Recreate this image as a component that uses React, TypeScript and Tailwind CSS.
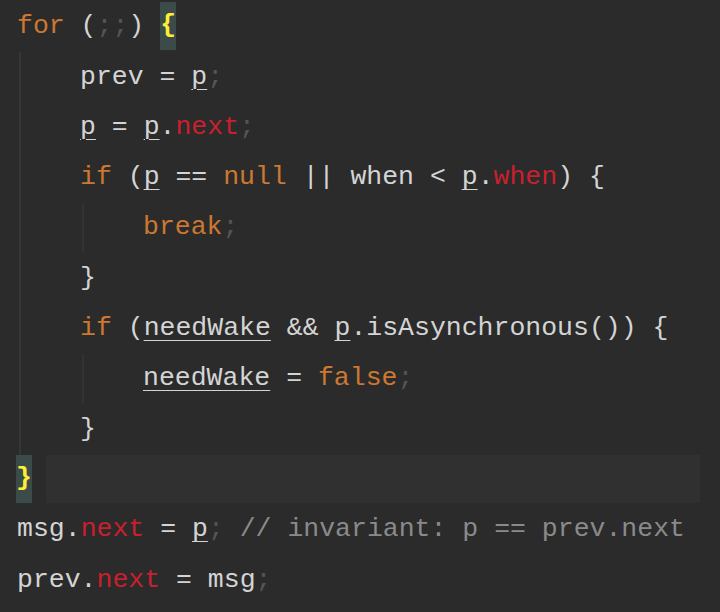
const TXT = "text-[#d4d4d4]";

function Kw({ children }: { children: string }) {
  return <span className="text-[#cc7832]">{children}</span>;
}

function Fld({ children }: { children: string }) {
  return <span className="text-[#c8202e]">{children}</span>;
}

function Semi() {
  return <span className="text-[#555555]">;</span>;
}

function Var({ children }: { children: string }) {
  return (
    <span className="underline decoration-1 underline-offset-[5px]">{children}</span>
  );
}

function Brace({ children }: { children: string }) {
  return (
    <span className="flex h-[48px] w-[16px] items-center justify-center self-start bg-[#3a4b4a] font-bold text-[#ffee33]">
      {children}
    </span>
  );
}

function Line({ children, className = "" }: { children: React.ReactNode; className?: string }) {
  return <div className={`flex h-[50.3px] items-center whitespace-pre ${className}`}>{children}</div>;
}

export default function App() {
  return (
    <div
      className={`h-[612px] w-[720px] overflow-hidden bg-[#2b2b2b] pt-[2px] text-[26.5px] ${TXT}`}
      style={{ fontFamily: '"Liberation Mono", "DejaVu Sans Mono", monospace' }}
    >
      <Line className="pl-[17px]">
        <Kw>for</Kw>
        {" ("}
        <Semi />
        <Semi />
        {") "}
        <Brace>{"{"}</Brace>
      </Line>

      <div className="ml-[19px] border-l-2 border-[#363636] pl-[59px]">
        <Line>
          {"prev = "}
          <Var>p</Var>
          <Semi />
        </Line>
        <Line>
          <Var>p</Var>
          {" = "}
          <Var>p</Var>
          {"."}
          <Fld>next</Fld>
          <Semi />
        </Line>
        <Line>
          <Kw>if</Kw>
          {" ("}
          <Var>p</Var>
          {" == "}
          <Kw>null</Kw>
          {" || when < "}
          <Var>p</Var>
          {"."}
          <Fld>when</Fld>
          {") {"}
        </Line>
        <div className="ml-[2px] border-l-2 border-[#323232] pl-[59px]">
          <Line>
            <Kw>break</Kw>
            <Semi />
          </Line>
        </div>
        <Line>{"}"}</Line>
        <Line>
          <Kw>if</Kw>
          {" ("}
          <Var>needWake</Var>
          {" && "}
          <Var>p</Var>
          {".isAsynchronous()) {"}
        </Line>
        <div className="ml-[2px] border-l-2 border-[#323232] pl-[59px]">
          <Line>
            <Var>needWake</Var>
            {" = "}
            <Kw>false</Kw>
            <Semi />
          </Line>
        </div>
        <Line>{"}"}</Line>
      </div>

      <Line className="pl-[16px]">
        <Brace>{"}"}</Brace>
        <div className="ml-[14px] mr-[20px] h-[48px] flex-1 self-start bg-[#303030]" />
      </Line>

      <Line className="pl-[17px]">
        {"msg."}
        <Fld>next</Fld>
        {" = "}
        <Var>p</Var>
        <Semi />
        <span className="text-[#8a8a8a]">{" // invariant: p == prev.next"}</span>
      </Line>
      <Line className="pl-[17px]">
        {"prev."}
        <Fld>next</Fld>
        {" = msg"}
        <Semi />
      </Line>
    </div>
  );
}
